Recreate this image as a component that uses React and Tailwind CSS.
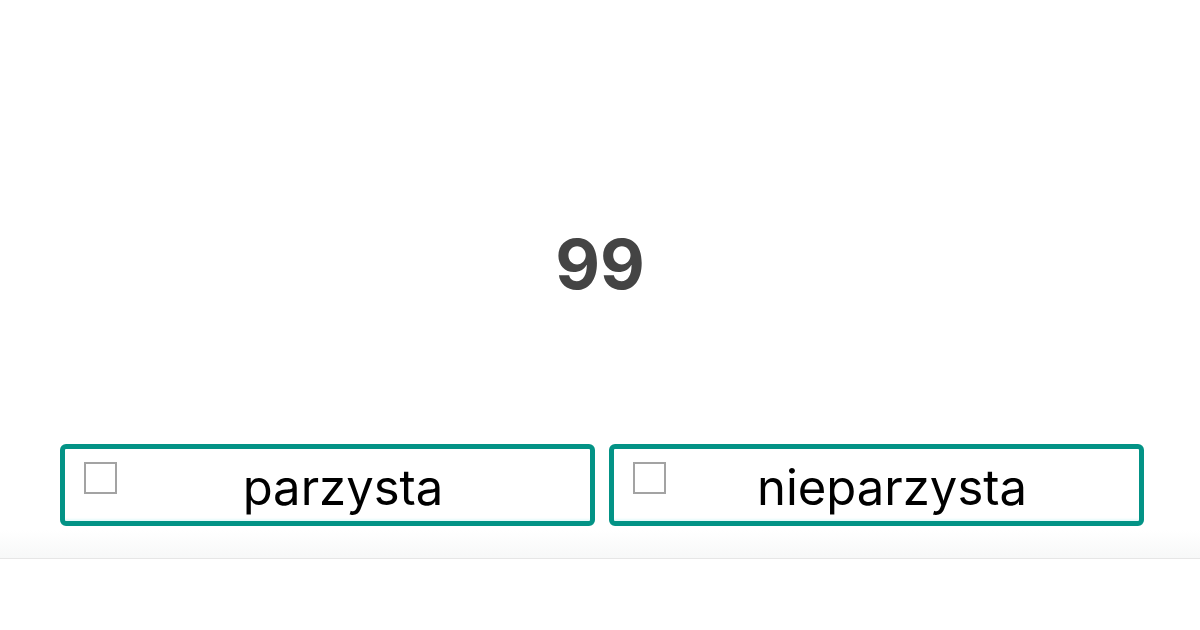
import React, { useState } from 'react';

// Parity quiz: a number and two answer buttons
function AnswerButton({ label, checked, onToggle }) {
  return (
    <button
      onClick={onToggle}
      className="relative flex h-[82px] items-center justify-center rounded-[6px] border-[5px] border-[#039386] bg-white pl-[31px] pt-[5px] shadow-[inset_0_-4px_2px_-2px_#e8fbfb]"
    >
      <span className="absolute left-[19px] top-[13px] flex h-[32px] w-[33px] items-center justify-center border-2 border-[#a3a3a3] bg-white">
        {checked ? <span className="text-lg leading-none text-[#009688]">✓</span> : null}
      </span>
      <span className="text-[49px] leading-none text-black">{label}</span>
    </button>
  );
}

export default function App() {
  const [answer, setAnswer] = useState(null);

  return (
    <div className="h-[630px] w-full bg-white font-['Inter','Noto_Sans',sans-serif]">
      <div className="flex h-[559px] flex-col border-b border-[#e6e6e6] bg-gradient-to-b from-white from-[95%] to-[#f7f8f8]">
        <div className="pt-[230px] text-center text-[69px] font-bold leading-none text-[#444444]">99</div>
        <div className="mt-[145px] grid grid-cols-2 gap-[14px] pl-[60px] pr-[56px]">
          <AnswerButton
            label="parzysta"
            checked={answer === 'even'}
            onToggle={() => setAnswer(answer === 'even' ? null : 'even')}
          />
          <AnswerButton
            label="nieparzysta"
            checked={answer === 'odd'}
            onToggle={() => setAnswer(answer === 'odd' ? null : 'odd')}
          />
        </div>
      </div>
    </div>
  );
}
